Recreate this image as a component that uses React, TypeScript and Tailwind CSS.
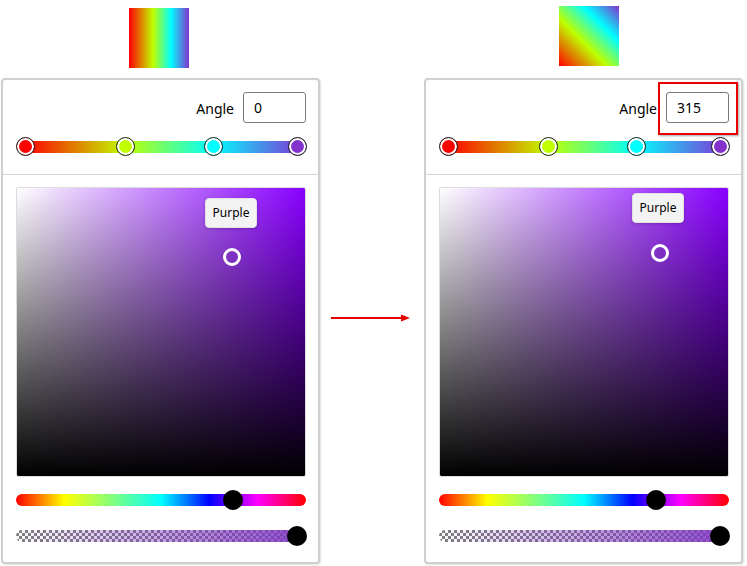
import React from "react";

const STOPS = [
  { left: 13, color: "#ff0000" },
  { left: 113, color: "#c0ff00" },
  { left: 201, color: "#00ffff" },
  { left: 285, color: "#8332cc" },
];

interface PickerProps {
  angle: string;
  tipLeft: number;
  tipTop: number;
  dotLeft: number;
  dotTop: number;
  highlight?: boolean;
}

function ColorPanel({ angle, tipLeft, tipTop, dotLeft, dotTop, highlight }: PickerProps) {
  return (
    <div className="relative w-[319px] h-[486px] border-2 border-[#cfcfcf] rounded-[4px] bg-white shadow-[1px_1px_2px_rgba(0,0,0,0.12)] flex flex-col">
      {/* angle row */}
      <div className="flex items-center justify-end gap-[9px] pt-[12px] pr-[12px]">
        <span className="text-[14px] text-black leading-none pt-[2px]">Angle</span>
        <div className="w-[63px] h-[31px] border border-[#7a7a7a] rounded-[3px] flex items-center pl-[10px] text-[14px] text-black">
          {angle}
        </div>
      </div>

      {/* gradient stops */}
      <div className="relative h-[19px] mt-[14px]">
        <div className="absolute left-[22px] top-[4px] w-[272px] h-[12px] bg-[linear-gradient(to_right,#ff0000,#c0ff00_37%,#00ffff_69%,#7a40d8)]" />
        {STOPS.map((s) => (
          <div
            key={s.left}
            className="absolute top-0 w-[19px] h-[19px] rounded-full border border-[#222] shadow-[inset_0_0_0_2px_#fff]"
            style={{ left: s.left, backgroundColor: s.color }}
          />
        ))}
      </div>

      <div className="mt-[18px] h-px bg-[#d4d4d4]" />

      {/* spectrum */}
      <div className="relative ml-[13px] mt-[12px] w-[290px] h-[290px] rounded-[2px] border border-[#dcdcdc] bg-clip-padding bg-[linear-gradient(to_top,#000,transparent),linear-gradient(to_right,#fff,#8800ff)]">
        <div
          className="absolute w-[52px] h-[30px] flex items-center justify-center rounded-[4px] bg-[#f3f3f3] border border-[#e2e2e2] shadow-[0_1px_3px_rgba(0,0,0,0.2)] text-[12px] text-black"
          style={{ left: tipLeft, top: tipTop }}
        >
          Purple
        </div>
        <div
          className="absolute w-[18px] h-[18px] rounded-full border-[3px] border-white"
          style={{ left: dotLeft, top: dotTop }}
        />
      </div>

      {/* hue */}
      <div className="relative ml-[13px] mt-[17px] w-[290px] h-[12px] rounded-full bg-[linear-gradient(to_right,#ff0000,#ffff00_16.7%,#00ffff_50%,#0000ff_66.7%,#ff00ff_83.3%,#ff0000)]">
        <div className="absolute left-[207px] top-[-4px] w-[20px] h-[20px] rounded-full bg-black" />
      </div>

      {/* alpha */}
      <div className="relative ml-[13px] mt-[24px] w-[290px] h-[12px]">
        <div className="w-full h-full rounded-full overflow-hidden bg-[repeating-conic-gradient(#808080_0_25%,#ffffff_0_50%)] bg-[length:6px_6px]">
          <div className="w-full h-full bg-[linear-gradient(to_right,rgba(138,60,210,0),rgba(128,56,196,0.92))]" />
        </div>
        <div className="absolute left-[271px] top-[-4px] w-[20px] h-[20px] rounded-full bg-black" />
      </div>

      {highlight && (
        <div className="absolute left-[232px] top-[2px] w-[80px] h-[53px] border-2 border-[#e80000] shadow-[1px_1px_2px_rgba(0,0,0,0.35)]" />
      )}
    </div>
  );
}

export default function App() {
  return (
    <div className="w-[747px] h-[566px] bg-white flex items-start font-['Noto_Sans',sans-serif]">
      <div className="ml-[1px] flex flex-col">
        <div className="ml-[128px] mt-[8px] w-[60px] h-[60px] bg-[linear-gradient(to_right,#ff0000,#c0ff00_40%,#00ffff_70%,#8332cc)]" />
        <div className="mt-[10px]">
          <ColorPanel angle="0" tipLeft={188} tipTop={10} dotLeft={206} dotTop={60} />
        </div>
      </div>

      <div className="w-[104px] pt-[313px] pl-[11px]">
        <svg width="80" height="10" viewBox="0 0 80 10">
          <line x1="0" y1="5" x2="72" y2="5" stroke="#e80000" strokeWidth="2" />
          <polygon points="70,1.5 79,5 70,8.5" fill="#e80000" />
        </svg>
      </div>

      <div className="flex flex-col">
        <div className="ml-[135px] mt-[6px] w-[60px] h-[60px] bg-[linear-gradient(45deg,#ff0000,#c0ff00_40%,#00ffff_70%,#8332cc)]" />
        <div className="mt-[12px]">
          <ColorPanel angle="315" tipLeft={192} tipTop={5} dotLeft={211} dotTop={56} highlight />
        </div>
      </div>
    </div>
  );
}
